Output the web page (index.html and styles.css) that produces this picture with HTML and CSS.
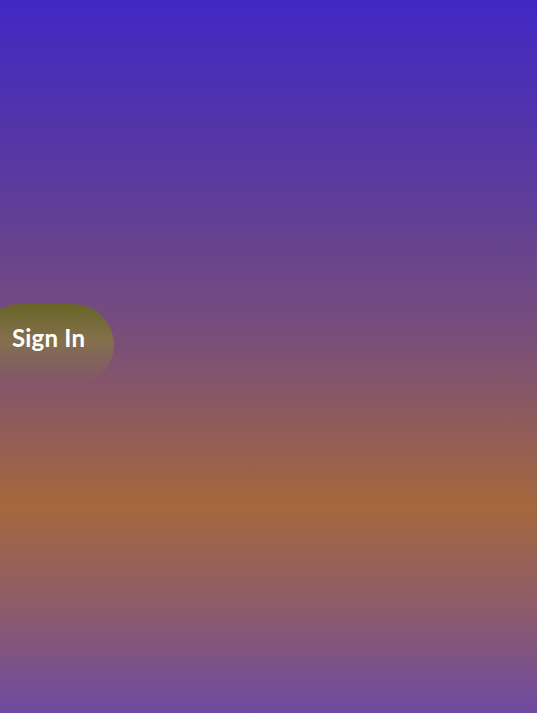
FILE: index.html
```html
<!DOCTYPE html>
<html>
<head>
<meta charset="utf-8">
<link rel="stylesheet" href="styles.css">
</head>
<body>
<main class="page">
  <button class="signin">Sign In</button>
</main>
</body>
</html>
```
FILE: styles.css
```css
html, body {
  margin: 0;
  padding: 0;
  height: 100%;
}
body {
  background: linear-gradient(to bottom, #4128c4 0%, #5a3a9e 25%, #7a4f78 48%, #a5683c 71%, #8c5a6c 86%, #6d4aa2 100%);
  font-family: "Lato", "Open Sans", sans-serif;
  overflow: hidden;
}
.page {
  padding-top: 304px;
}
.signin {
  display: block;
  margin-left: -20px;
  height: 82px;
  padding: 0 29px 16px 32px;
  border: none;
  border-radius: 41px;
  background: linear-gradient(to bottom, rgba(105,100,38,1) 0%, rgba(135,118,68,0.85) 45%, rgba(150,110,90,0) 100%);
  color: #fff;
  font-family: "Lato", sans-serif;
  font-weight: 700;
  font-size: 24px;
  letter-spacing: 0.2px;
}
```
